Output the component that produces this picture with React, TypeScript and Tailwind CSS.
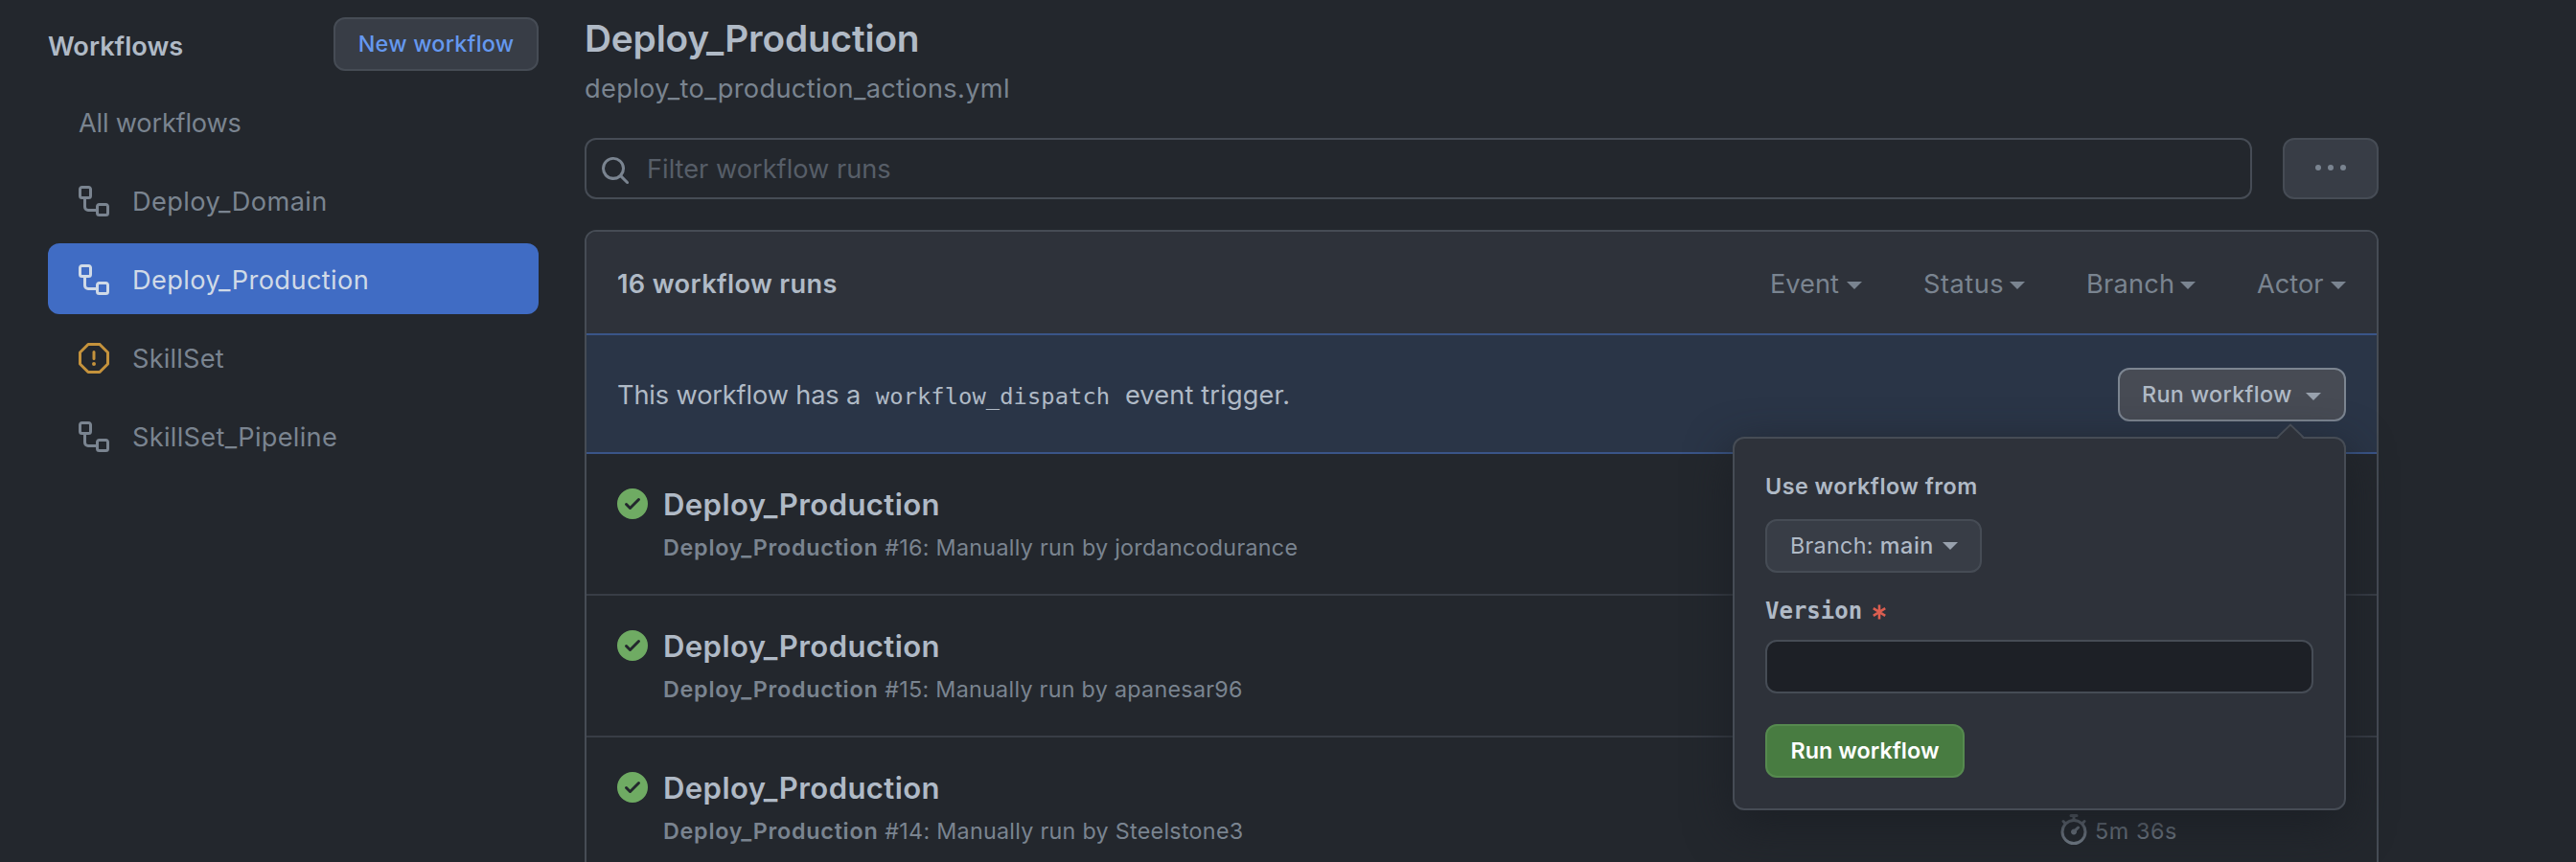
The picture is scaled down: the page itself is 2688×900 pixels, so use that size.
import React from "react";

type IconProps = { d: string; className?: string };

function Icon({ d, className = "" }: IconProps) {
  return (
    <svg viewBox="0 0 16 16" className={`size-8 shrink-0 fill-current ${className}`} aria-hidden="true">
      <path d={d} />
    </svg>
  );
}

const WORKFLOW =
  "M0 1.75C0 .784.784 0 1.75 0h3.5C6.216 0 7 .784 7 1.75v3.5A1.75 1.75 0 0 1 5.25 7H4v4a1 1 0 0 0 1 1h4v-1.25C9 9.784 9.784 9 10.75 9h3.5c.966 0 1.75.784 1.75 1.75v3.5A1.75 1.75 0 0 1 14.25 16h-3.5A1.75 1.75 0 0 1 9 14.25v-.75H5A2.5 2.5 0 0 1 2.5 11V7h-.75A1.75 1.75 0 0 1 0 5.25Zm1.75-.25a.25.25 0 0 0-.25.25v3.5c0 .138.112.25.25.25h3.5a.25.25 0 0 0 .25-.25v-3.5a.25.25 0 0 0-.25-.25Zm9 9a.25.25 0 0 0-.25.25v3.5c0 .138.112.25.25.25h3.5a.25.25 0 0 0 .25-.25v-3.5a.25.25 0 0 0-.25-.25Z";
const STOP =
  "M4.47.22A.749.749 0 0 1 5 0h6c.199 0 .389.079.53.22l4.25 4.25c.141.14.22.331.22.53v6a.749.749 0 0 1-.22.53l-4.25 4.25A.749.749 0 0 1 11 16H5a.749.749 0 0 1-.53-.22L.22 11.53A.749.749 0 0 1 0 11V5c0-.199.079-.389.22-.53Zm.84 1.28L1.5 5.31v5.38l3.81 3.81h5.38l3.81-3.81V5.31L10.69 1.5ZM8 4a.75.75 0 0 1 .75.75v3.5a.75.75 0 0 1-1.5 0v-3.5A.75.75 0 0 1 8 4Zm0 8a1 1 0 1 1 0-2 1 1 0 0 1 0 2Z";
const SEARCH =
  "M10.68 11.74a6 6 0 0 1-7.922-8.982 6 6 0 0 1 8.982 7.922l3.04 3.04a.749.749 0 0 1-.326 1.275.749.749 0 0 1-.734-.215ZM11.5 7a4.499 4.499 0 1 0-8.997 0A4.499 4.499 0 0 0 11.5 7Z";
const CHECK =
  "M8 16A8 8 0 1 1 8 0a8 8 0 0 1 0 16Zm3.78-9.72a.751.751 0 0 0-.018-1.042.751.751 0 0 0-1.042-.018L6.75 9.19 5.28 7.72a.751.751 0 0 0-1.042.018.751.751 0 0 0-.018 1.042l2 2a.75.75 0 0 0 1.06 0Z";
const STOPWATCH =
  "M5.75.75A.75.75 0 0 1 6.5 0h3a.75.75 0 0 1 0 1.5h-.75v1l-.001.041a6.724 6.724 0 0 1 3.464 1.435l.007-.006.75-.75a.749.749 0 0 1 1.275.326.749.749 0 0 1-.215.734l-.75.75-.006.007a6.75 6.75 0 1 1-10.548 0L2.72 5.03l-.75-.75a.751.751 0 0 1 .018-1.042.751.751 0 0 1 1.042-.018l.75.75.007.006A6.72 6.72 0 0 1 7.25 2.541V1.5H6.5a.75.75 0 0 1-.75-.75ZM8 14.5a5.25 5.25 0 1 0-.001-10.501A5.25 5.25 0 0 0 8 14.5Zm.389-6.7 1.33-1.33a.75.75 0 1 1 1.061 1.06L9.45 8.861A1.503 1.503 0 0 1 8 10.75a1.499 1.499 0 1 1 .389-2.95Z";

function Caret({ className = "" }: { className?: string }) {
  return (
    <svg viewBox="0 0 16 8" className={`h-2 w-4 shrink-0 fill-current ${className}`} aria-hidden="true">
      <path d="M0 0h16L8 8z" />
    </svg>
  );
}

const workflows = [
  { name: "Deploy_Domain", icon: WORKFLOW, tone: "", tracking: "tracking-[0.4px]" },
  { name: "Deploy_Production", icon: WORKFLOW, tone: "", tracking: "tracking-[0.4px]", active: true },
  { name: "SkillSet", icon: STOP, tone: "text-[#c4923c]", tracking: "tracking-[0.2px]" },
  { name: "SkillSet_Pipeline", icon: WORKFLOW, tone: "", tracking: "tracking-[0.29px]" },
];

const filters = [
  { label: "Event", box: "w-[96px]", tracking: "" },
  { label: "Status", box: "w-[106px]", tracking: "tracking-[0.5px]" },
  { label: "Branch", box: "w-[114px]", tracking: "tracking-[0.2px]" },
  { label: "Actor", box: "w-[93px]", tracking: "" },
];

const runs = [
  { number: 16, actor: "jordancodurance" },
  { number: 15, actor: "apanesar96" },
  { number: 14, actor: "Steelstone3", duration: "5m 36s" },
];

function Sidebar() {
  return (
    <aside className="w-[512px] shrink-0 pt-[18px]">
      <div className="flex h-14 items-center justify-between">
        <h2 className="pt-1.5 text-[27.2px] leading-9 font-semibold text-[#b0bac6]">Workflows</h2>
        <button className="flex h-14 w-[214px] items-center justify-center rounded-xl border-2 border-[#464c55] bg-[#383d46] text-[23.3px] font-medium tracking-[0.25px] text-[#6598ef]">
          New workflow
        </button>
      </div>
      <nav className="mt-4 flex flex-col gap-2 text-[27.2px] text-[#7a8490]">
        <a className="flex h-[74px] items-center px-8 pt-1 tracking-[-0.2px]">All workflows</a>
        {workflows.map((w) => (
          <a
            key={w.name}
            className={`flex h-[74px] items-center gap-6 rounded-xl px-8 pt-0.5 ${w.active ? "bg-[#406cc4] text-[#d0dae7]" : ""}`}
          >
            <Icon d={w.icon} className={w.tone} />
            <span className={`pt-0.5 ${w.tracking}`}>{w.name}</span>
          </a>
        ))}
      </nav>
    </aside>
  );
}

function DispatchPopover() {
  return (
    <div className="absolute top-[72px] right-0 z-10 flex h-[390px] w-[640px] flex-col items-start rounded-xl border-2 border-[#464c55] bg-[#2e323a] px-8 pt-[32px] text-[#b0bac6] shadow-[0_16px_48px_#1c2026]">
      <svg viewBox="0 0 32 18" className="absolute -top-4 right-[40px] h-[18px] w-8" aria-hidden="true">
        <path d="M1 18 16 2 31 18z" className="fill-[#2e323a]" />
        <path d="M1.500 15.500 16 1.500 30.500 15.500" fill="none" strokeWidth="1.8" className="stroke-[#464c55]" />
      </svg>
      <div className="h-9 text-[23.3px] leading-9 font-semibold tracking-[0.5px]">Use workflow from</div>
      <button className="mt-4 flex h-14 w-[226px] items-center rounded-xl border-2 border-[#464c55] bg-[#383d46] pl-6 text-[23.3px]">
        <span className="tracking-[0.3px]">Branch:</span>
        <span className="ml-[7px] font-medium tracking-[0.6px]">main</span>
        <Caret className="ml-[9px] text-[#98a1ad]" />
      </button>
      <label className="mt-[22px] flex h-9 items-center font-['DejaVu_Sans_Mono',monospace] text-[24px] font-bold">
        Version
        <svg viewBox="0 0 14 16" className="mt-0.5 ml-[11px] h-4 w-3.5" aria-hidden="true">
          <path
            d="M7 .5v15M.8 4.200l12.400 7.600M13.200 4.200.8 11.800"
            fill="none"
            strokeWidth="2.6"
            className="stroke-[#dc5e50]"
          />
        </svg>
      </label>
      <input className="mt-3 h-14 w-[572px] rounded-xl border-2 border-[#464c55] bg-[#1d2026]" />
      <button className="mt-8 flex h-14 w-[208px] items-center justify-center rounded-xl border-2 border-[#568a4f] bg-[#487c41] text-[23.3px] font-semibold tracking-[0.05px] text-white">
        Run workflow
      </button>
    </div>
  );
}

function RunRow({ number, actor, duration }: { number: number; actor: string; duration?: string }) {
  return (
    <div className="flex h-[148px] border-b-2 border-[#383d46] pt-9 pl-8">
      <Icon d={CHECK} className="text-[#6fab63]" />
      <div className="ml-4 w-[1456px] pt-px">
        <h3 className="h-[33px] text-[31.1px] leading-[33px] font-semibold tracking-[0.38px] text-[#b0bac6]">
          Deploy_Production
        </h3>
        <p className="mt-3 h-8 text-[23.3px] leading-8 tracking-[0.28px] text-[#7a8490]">
          <span className="font-semibold tracking-[0.75px]">Deploy_Production</span> #{number}: Manually run by {actor}
        </p>
      </div>
      {duration && (
        <div className="mt-11 flex h-8 items-center text-[#7a8490]">
          <Icon d={STOPWATCH} />
          <span className="ml-1.5 pt-1 text-[23.3px] tracking-[0.6px]">{duration}</span>
        </div>
      )}
    </div>
  );
}

export default function App() {
  return (
    <div className="flex h-[900px] w-[2688px] gap-12 overflow-hidden bg-[#23272d] pl-[50px] font-['Inter',sans-serif]">
      <Sidebar />
      <main className="flex w-[1872px] flex-col">
        <h1 className="mt-4 h-12 text-[38.8px] leading-[48px] font-semibold tracking-[-0.18px] text-[#b0bac6]">
          Deploy_Production
        </h1>
        <p className="mt-[11px] h-9 text-[27.2px] leading-9 tracking-[0.34px] text-[#7a8490]">
          deploy_to_production_actions.yml
        </p>

        <div className="mt-[33px] flex gap-8">
          <div className="flex h-16 w-[1740px] items-center rounded-xl border-2 border-[#464c55] pl-3.5">
            <Icon d={SEARCH} className="mt-1 text-[#7a8490]" />
            <span className="ml-[17px] pt-0.5 text-[27.2px] text-[#575e68]">Filter workflow runs</span>
          </div>
          <button className="flex h-16 w-[100px] items-center justify-center rounded-xl border-2 border-[#464c55] bg-[#383d46]">
            <svg viewBox="0 0 32 6" className="mb-0.5 h-1.5 w-8 fill-[#7a8490]" aria-hidden="true">
              <circle cx="3" cy="3" r="3" />
              <circle cx="16" cy="3" r="3" />
              <circle cx="29" cy="3" r="3" />
            </svg>
          </button>
        </div>

        <section className="mt-8 h-[720px] rounded-t-xl border-2 border-[#464c55]">
          <header className="flex h-[106px] items-center justify-between rounded-t-[10px] bg-[#2e323a] px-8 pt-1 text-[27.2px]">
            <span className="font-semibold tracking-[0.37px] text-[#b0bac6]">16 workflow runs</span>
            <div className="flex gap-16 text-[#7a8490]">
              {filters.map((f) => (
                <span key={f.label} className={`flex items-center justify-between ${f.box}`}>
                  <span className={f.tracking}>{f.label}</span>
                  <Caret className="mt-0.5" />
                </span>
              ))}
            </div>
          </header>

          <div className="flex h-[126px] items-center justify-between border-y-2 border-[#3a5588] bg-[#2a3547] px-8">
            <p className="pt-1 text-[27.2px] text-[#b0bac6]">
              <span className="tracking-[-0.14px]">This workflow has a</span>{" "}
              <code className="px-2 font-['DejaVu_Sans_Mono',monospace] text-[23.8px] tracking-[0.05px]">
                workflow_dispatch
              </code>{" "}
              <span className="tracking-[0.15px]">event trigger.</span>
            </p>
            <div className="relative mt-0.5">
              <button className="flex h-14 w-[238px] items-center rounded-xl border-2 border-[#7c8591] bg-[#474b54] pl-[23px] text-[23.3px] font-medium tracking-[0.35px] text-[#b0bac6]">
                Run workflow
                <Caret className="mt-1 ml-[14px] text-[#98a1ad]" />
              </button>
              <DispatchPopover />
            </div>
          </div>

          {runs.map((r) => (
            <RunRow key={r.number} {...r} />
          ))}
        </section>
      </main>
    </div>
  );
}
